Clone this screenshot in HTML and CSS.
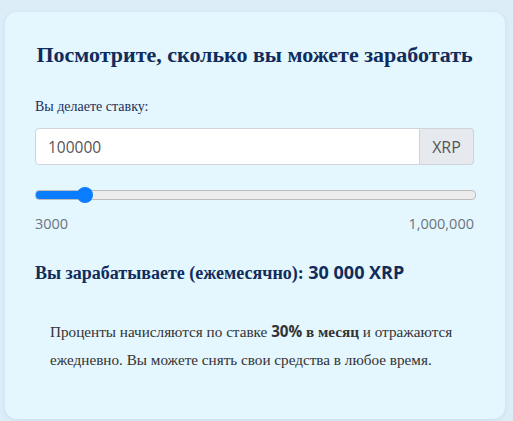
FILE: index.html
```html
<!DOCTYPE html>
<html lang="ru">
<head>
    <meta charset="UTF-8">
    <meta name="viewport" content="width=device-width, initial-scale=1.0">
    <title>Калькулятор дохода</title>
    <link rel="stylesheet" href="styles.css">
</head>
<body>

    <div class="calc-card">
        <h2 class="calc-title">Посмотрите, сколько вы можете заработать</h2>

        <label class="calc-label" for="stake">Вы делаете ставку:</label>
        <div class="input-group">
            <input type="text" id="stake" class="stake-input" value="100000">
            <span class="input-addon">XRP</span>
        </div>

        <input type="range" id="stakeRange" class="stake-range" min="3000" max="1000000" value="100000">
        <div class="range-limits">
            <span>3000</span>
            <span>1,000,000</span>
        </div>

        <h3 class="calc-result">Вы зарабатываете (ежемесячно): <span class="num" id="earn">30 000 XRP</span></h3>

        <p class="calc-note">
            Проценты начисляются по ставке <strong><span class="num">30%</span> в месяц</strong> и отражаются
            ежедневно. Вы можете снять свои средства в любое время.
        </p>
    </div>

</body>
</html>
```

FILE: styles.css
```css
/* Página */
body {
    margin: 0;
    padding: 12px 8px 4px 5px;
    background-color: #dcedf8;
    font-family: "Liberation Serif", "Times New Roman", serif;
}

/* Tarjeta principal */
.calc-card {
    background-color: #e4f6fe;
    border-radius: 12px;
    box-shadow: 0 1px 4px rgba(60, 110, 150, 0.12);
    padding: 29px 31px 45px 30px;
}

.calc-title {
    margin: 0 0 29px 0;
    text-align: center;
    font-size: 22px;
    line-height: 27px;
    font-weight: bold;
    color: #102c5c;
}

.calc-label {
    display: block;
    font-size: 14px;
    line-height: 20px;
    color: #1b2f5c;
    margin-bottom: 11px;
}

/* Campo con sufijo */
.input-group {
    display: flex;
    height: 37px;
}

.stake-input {
    flex: 1;
    min-width: 0;
    margin: 0;
    padding: 0 12px;
    border: 1px solid #ced4da;
    border-radius: 4px 0 0 4px;
    background: #fff;
    font-family: "Open Sans", sans-serif;
    font-size: 15.5px;
    color: #555;
    outline: none;
}

.input-addon {
    display: flex;
    align-items: center;
    justify-content: center;
    width: 53px;
    border: 1px solid #ced4da;
    border-left: none;
    border-radius: 0 4px 4px 0;
    background: #e6eaee;
    font-family: "Open Sans", sans-serif;
    font-size: 16px;
    color: #555;
}

/* Deslizador */
.stake-range {
    -webkit-appearance: none;
    appearance: none;
    display: block;
    width: 100%;
    height: 8px;
    margin: 25px 0 0 0;
    border: 1px solid #bdbdbd;
    border-radius: 4px;
    background: linear-gradient(to right, #0a7cff 0, #0a7cff 11%, #ececec 11%);
    outline: none;
}

.stake-range::-webkit-slider-thumb {
    -webkit-appearance: none;
    appearance: none;
    width: 16px;
    height: 16px;
    border-radius: 50%;
    background: #0a7cff;
    border: none;
}

.range-limits {
    display: flex;
    justify-content: space-between;
    margin-top: 15px;
    font-family: "Open Sans", sans-serif;
    font-size: 14.5px;
    line-height: 17px;
    color: #6c757d;
}

.calc-result {
    margin: 28px 0 0 0;
    font-size: 18px;
    line-height: 24px;
    font-weight: bold;
    color: #102c5c;
}

.num {
    font-family: "Open Sans", sans-serif;
}

.calc-note {
    margin: 32px 0 0 0;
    padding-left: 15px;
    font-size: 15.2px;
    line-height: 28px;
    color: #333;
}

.calc-note strong {
    color: #333;
}
```
